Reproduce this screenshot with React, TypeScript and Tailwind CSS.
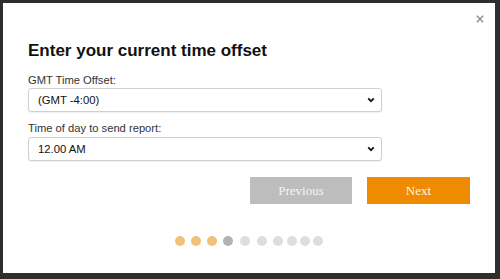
import React from "react";

function Chevron() {
  return (
    <svg width="8" height="6" viewBox="0 0 8 6" className="shrink-0">
      <path d="M1.2 1.3 L4 4.2 L6.8 1.3" fill="none" stroke="#111" strokeWidth="1.7" />
    </svg>
  );
}

function FakeSelect({ value }: { value: string }) {
  return (
    <div className="flex h-[24px] w-[354px] items-center justify-between rounded-[3px] border border-[#cfcfcf] bg-white pl-[9px] pr-[6px] text-[11.3px] text-[#111] shadow-[0_1px_1px_rgba(0,0,0,0.06)]">
      <span>{value}</span>
      <Chevron />
    </div>
  );
}

export default function App() {
  const dots = [
    "bg-[#f2c27a]",
    "ml-[6px] bg-[#f2c27a]",
    "ml-[6px] bg-[#f2c27a]",
    "ml-[6px] bg-[#b3b3b3]",
    "ml-[7px] bg-[#dedede]",
    "ml-[7px] bg-[#dedede]",
    "ml-[6px] bg-[#dedede]",
    "ml-[4px] bg-[#dedede]",
    "ml-[3px] bg-[#dedede]",
    "ml-[3px] bg-[#dedede]",
  ];
  return (
    <div
      className="h-[279px] w-[500px] bg-[#2e2e2e] pb-[6px] pl-[3px] pr-[5px] pt-[3px]"
      style={{ fontFamily: '"Liberation Sans", Arial, sans-serif' }}
    >
      <div className="relative flex h-full w-full flex-col bg-white pl-[25px] pr-[25px] pt-[38px]">
        <button className="absolute right-[10px] top-[11px] flex h-[10px] w-[10px] items-center justify-center">
          <svg width="8" height="8" viewBox="0 0 8 8">
            <path d="M0.8 0.8 L7.2 7.2 M7.2 0.8 L0.8 7.2" stroke="#8f8f8f" strokeWidth="1.4" />
          </svg>
        </button>
        <h1 className="text-[17px] font-bold leading-[20px] text-[#111]">Enter your current time offset</h1>
        <div className="mt-[13px] text-[11.2px] leading-[13px] text-[#333]">GMT Time Offset:</div>
        <div className="mt-[1px]">
          <FakeSelect value="(GMT -4:00)" />
        </div>
        <div className="mt-[10px] text-[11.2px] leading-[13px] text-[#333]">Time of day to send report:</div>
        <div className="mt-[2px]">
          <FakeSelect value="12.00 AM" />
        </div>
        <div className="mt-[16px] flex justify-end gap-[15px]">
          <button
            className="flex h-[27px] w-[102px] items-center justify-center bg-[#bdbdbd] text-[13px] text-[#f4f4f4]"
            style={{ fontFamily: '"Liberation Serif", "Times New Roman", serif' }}
          >
            Previous
          </button>
          <button
            className="flex h-[27px] w-[103px] items-center justify-center bg-[#ee8b00] text-[13px] text-[#fff6e8]"
            style={{ fontFamily: '"Liberation Serif", "Times New Roman", serif' }}
          >
            Next
          </button>
        </div>
        <div className="mt-[32px] flex justify-center">
          {dots.map((c, i) => (
            <span key={i} className={`block h-[10px] w-[10px] rounded-full ${c}`} />
          ))}
        </div>
      </div>
    </div>
  );
}
